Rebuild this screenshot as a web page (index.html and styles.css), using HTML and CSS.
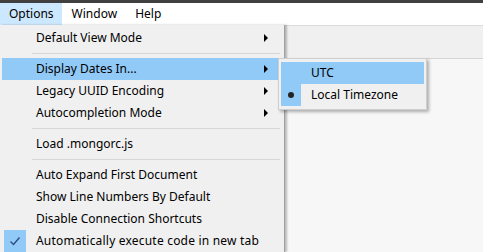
FILE: index.html
```html
<!DOCTYPE html>
<html lang="en">
<head>
    <meta charset="UTF-8">
    <title>Options Menu</title>
    <link rel="stylesheet" href="styles.css">
</head>
<body>
<div class="titlebar"></div>
<div class="menubar">
    <div class="menubar-item active">Options</div>
    <div class="menubar-item">Window</div>
    <div class="menubar-item">Help</div>
</div>
<div class="workspace">
    <div class="toolbar"></div>
    <div class="content"></div>

    <div class="menu">
        <div class="menu-item has-sub">Default View Mode</div>
        <div class="separator"></div>
        <div class="menu-item has-sub hover">Display Dates In...</div>
        <div class="menu-item has-sub">Legacy UUID Encoding</div>
        <div class="menu-item has-sub">Autocompletion Mode</div>
        <div class="separator"></div>
        <div class="menu-item">Load .mongorc.js</div>
        <div class="separator"></div>
        <div class="menu-item">Auto Expand First Document</div>
        <div class="menu-item">Show Line Numbers By Default</div>
        <div class="menu-item">Disable Connection Shortcuts</div>
        <div class="menu-item checked">
            <span class="mark">
                <svg width="12" height="10" viewBox="0 0 12 10"><path d="M1.5 5.5 L4.5 8.5 L10.5 1.5" fill="none" stroke="#2b4f86" stroke-width="1.4"/></svg>
            </span>
            <span class="wide">Automatically execute code in new tab</span>
        </div>
    </div>

    <div class="submenu">
        <div class="menu-item hover">UTC</div>
        <div class="menu-item checked"><span class="mark"><span class="dot"></span></span>Local Timezone</div>
    </div>
</div>
</body>
</html>
```

FILE: styles.css
```css
body {
    margin: 0;
    font-family: 'Noto Sans', 'Segoe UI', sans-serif;
    font-size: 12px;
    color: #000;
    background: #f0f0f0;
    width: 483px;
    height: 252px;
    overflow: hidden;
}
.titlebar {
    height: 3px;
    background: #404040;
}
.menubar {
    display: flex;
    height: 22px;
    background: #fff;
}
.menubar-item {
    padding: 0 7px 0 8px;
    line-height: 20px;
    border: 1px solid transparent;
    margin-right: 1px;
}
.menubar-item.active {
    background: #cce8ff;
    border-color: #cce8ff;
}
.workspace {
    position: relative;
    height: 227px;
}
.toolbar {
    height: 32px;
    border-top: 1px solid #dadada;
    border-bottom: 1px solid #d4d4d4;
    background: #f0f0f0;
}
.content {
    height: 194px;
    background: #f7f7f7;
}
.menu {
    position: absolute;
    left: 0;
    top: 0;
    width: 280px;
    padding: 2px 2px 0 2px;
    background: #f0f0f0;
    border-right: 1px solid #a0a0a0;
    box-shadow: 2px 0 2px rgba(0,0,0,0.25);
}
.menu-item {
    position: relative;
    height: 22px;
    line-height: 22px;
    padding-left: 34px;
    white-space: nowrap;
}
.menu-item.hover {
    background: #91c9f7;
}
.has-sub::after {
    content: "";
    position: absolute;
    right: 14px;
    top: 7px;
    border-left: 4px solid #000;
    border-top: 4px solid transparent;
    border-bottom: 4px solid transparent;
}
.separator {
    height: 1px;
    background: #d7d7d7;
    margin: 4px 2px 4px 30px;
}
.wide {
    letter-spacing: 0.2px;
}
.mark {
    position: absolute;
    left: 2px;
    top: 0;
    width: 22px;
    height: 22px;
    background: #91c9f7;
    display: flex;
    align-items: center;
    justify-content: center;
}
.dot {
    width: 6px;
    height: 6px;
    border-radius: 50%;
    background: #222;
}
.submenu {
    position: absolute;
    left: 278px;
    top: 33px;
    width: 143px;
    padding: 3px 2px;
    background: #f0f0f0;
    border: 1px solid #cfcfcf;
    box-shadow: 2px 2px 3px rgba(0,0,0,0.3);
}
.submenu .menu-item {
    padding-left: 30px;
}
.submenu .mark {
    left: 0;
    width: 20px;
}
```
